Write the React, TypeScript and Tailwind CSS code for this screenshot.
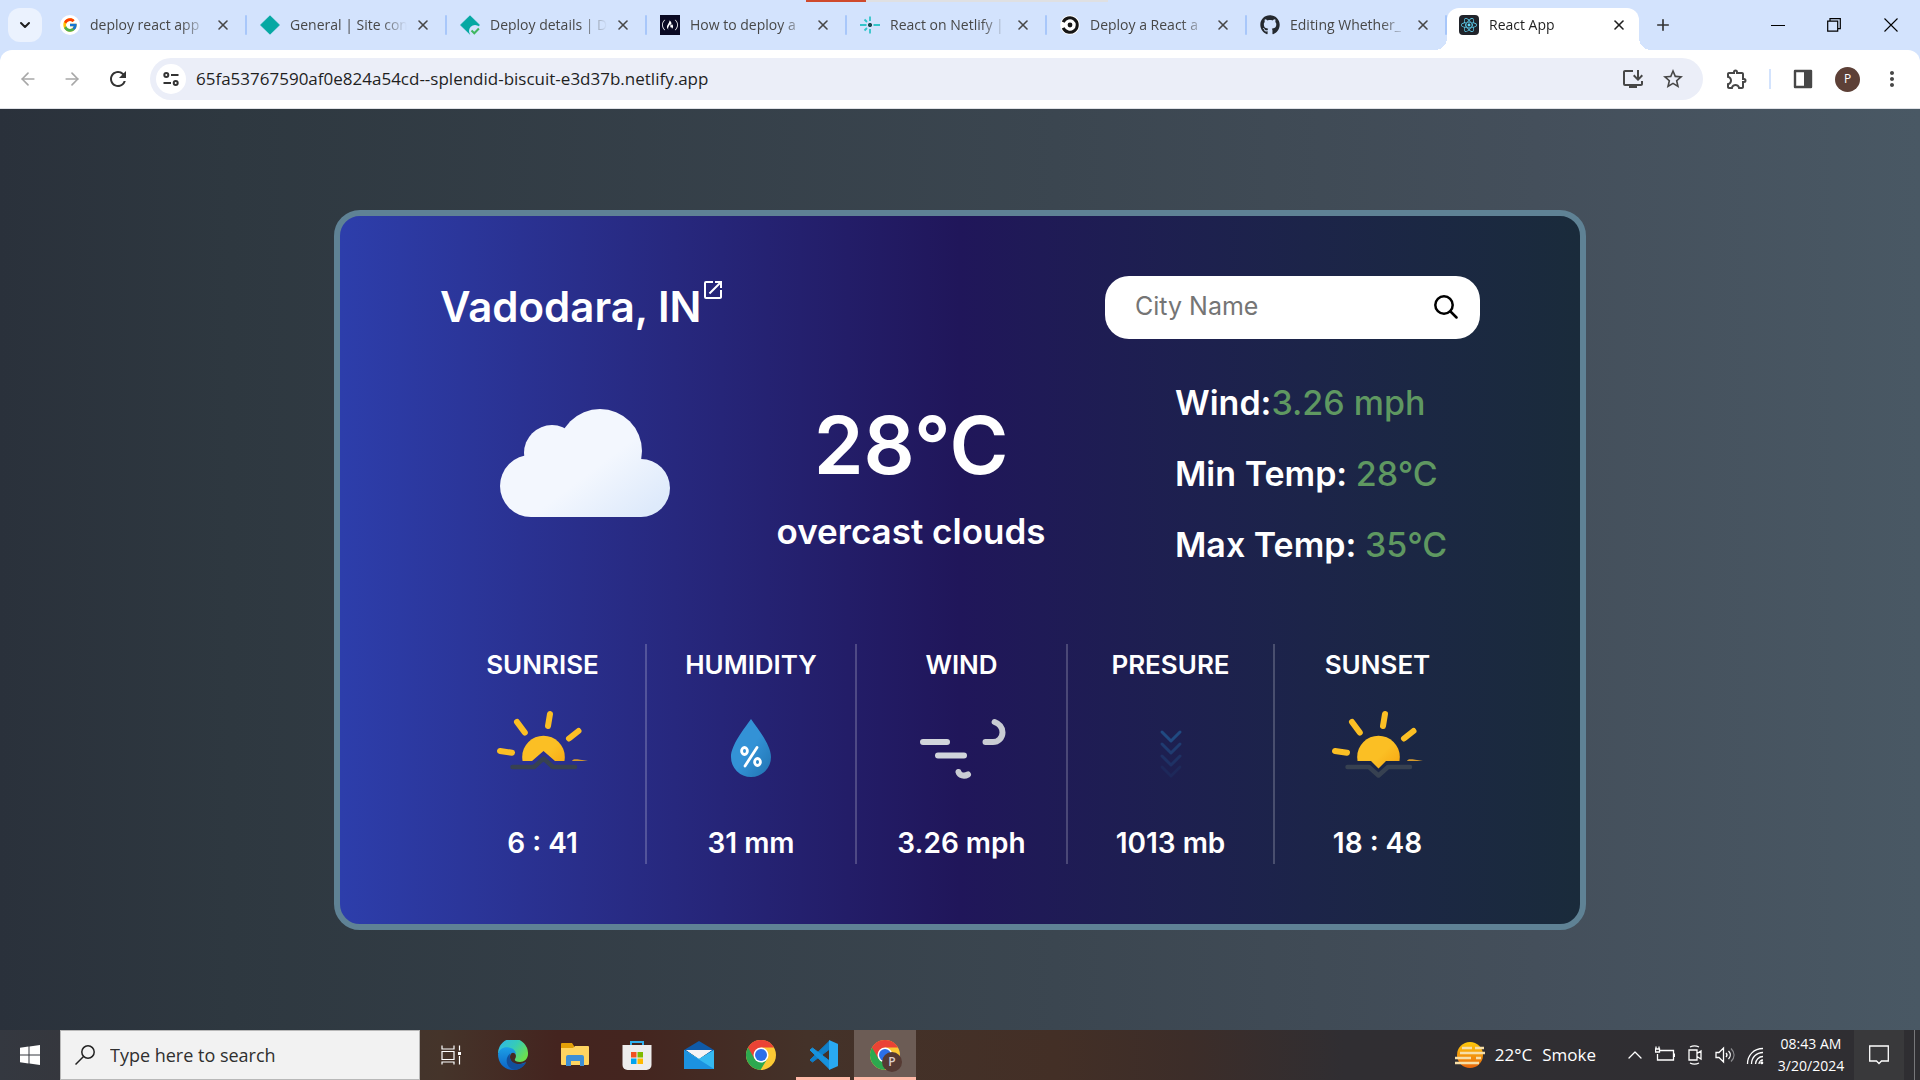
import React, { useState } from "react";
import type { ReactNode } from "react";
import { ArrowLeft, ArrowRight, ChevronDown, ChevronUp, Plus, X } from "lucide-react";
import { FcGoogle } from "react-icons/fc";
import { FaFreeCodeCamp, FaGithub, FaReact } from "react-icons/fa";
import {
  MdMoreVert,
  MdOpenInNew,
  MdOutlineExtension,
  MdOutlineInstallDesktop,
  MdRefresh,
  MdStarBorder,
} from "react-icons/md";

/* ---------- Browser tabs ---------- */

const NetlifyDiamond = ({ done = false }: { done?: boolean }) => (
  <svg viewBox="0 0 20 20" className="size-5">
    <path d="M10 .8 19.4 10 10 19.2.6 10z" fill="#05a8a3" stroke="#05a8a3" strokeLinejoin="round" />
    {done && (
      <>
        <circle cx="15" cy="16" r="6" fill="#d3e3fd" />
        <path d="m11.5 15.5 2.8 2.8 4.6-4.8" fill="none" stroke="#3fb75f" strokeWidth="2" />
      </>
    )}
  </svg>
);

const NetlifySpark = () => (
  <svg viewBox="0 0 20 20" className="size-5" stroke="#32c5c9" strokeWidth="1.8" fill="none">
    <path d="M0 10h6.5M13.5 10H20M10 1.5V6M10 14v4.5M4.5 4.5 7 7M4.5 15.5 7 13" />
    <path d="M8 10h4M10 8v4" stroke="#1d4a52" strokeWidth="2.4" />
  </svg>
);

const CircleMark = () => (
  <svg viewBox="0 0 20 20" className="size-5">
    <circle cx="10" cy="10" r="9.8" fill="#fff" />
    <path d="M3.2 7.2A7.3 7.3 0 1 1 3.2 12.8" fill="none" stroke="#161616" strokeWidth="3" />
    <circle cx="10" cy="10" r="2.4" fill="#161616" />
  </svg>
);

type Tab = { title: string; icon: ReactNode; active?: boolean };

const tabs: Tab[] = [
  {
    title: "deploy react app",
    icon: (
      <span className="grid size-5 place-items-center rounded-full bg-white">
        <FcGoogle className="size-4" />
      </span>
    ),
  },
  { title: "General | Site con", icon: <NetlifyDiamond /> },
  { title: "Deploy details | D", icon: <NetlifyDiamond done /> },
  {
    title: "How to deploy a",
    icon: (
      <span className="grid size-5 place-items-center bg-[#0a0a23]">
        <FaFreeCodeCamp className="size-4 text-white" />
      </span>
    ),
  },
  { title: "React on Netlify |", icon: <NetlifySpark /> },
  { title: "Deploy a React a", icon: <CircleMark /> },
  { title: "Editing Whether_", icon: <FaGithub className="size-5 text-[#24292f]" /> },
  {
    title: "React App",
    active: true,
    icon: (
      <span className="grid size-5 place-items-center rounded-sm bg-[#20232a]">
        <FaReact className="size-4 text-[#61dafb]" />
      </span>
    ),
  },
];

const TabItem = ({ title, icon, active }: Tab) => (
  <div
    className={
      active
        ? "relative mt-2 flex h-[42px] w-[192px] min-w-0 shrink items-center rounded-t-xl bg-white pb-2 pl-3 pr-2 text-[#1f1f1f]"
        : "flex h-full w-[200px] min-w-0 shrink items-center pl-[13px] text-[#474747]"
    }
  >
    {active && (
      <>
        <span className="absolute -left-3 bottom-0 size-3 bg-[radial-gradient(circle_at_0_0,transparent_12px,white_12px)]" />
        <span className="absolute -right-3 bottom-0 size-3 bg-[radial-gradient(circle_at_100%_0,transparent_12px,white_12px)]" />
      </>
    )}
    <span className="shrink-0">{icon}</span>
    <a
      href="#"
      className="ml-2.5 min-w-0 flex-1 overflow-hidden whitespace-nowrap text-sm [mask-image:linear-gradient(to_right,black_78%,transparent)]"
    >
      {title}
    </a>
    <button
      aria-label={`Close ${title}`}
      className={active ? "ml-1 grid size-6 place-items-center" : "ml-1 mr-2.5 grid size-6 place-items-center"}
    >
      <X className="size-4" strokeWidth={2.4} />
    </button>
    {!active && <span className="h-5 w-0.5 shrink-0 rounded bg-[#a8c7fa]" />}
  </div>
);

const TabStrip = () => (
  <header className="relative flex h-[50px] items-center bg-[#d3e3fd] pl-2">
    <div className="absolute left-[42%] top-0 flex h-0.5 w-[302px]">
      <span className="w-[60px] bg-[#cf4a2c]" />
      <span className="flex-1 bg-[#dfe0e2]" />
    </div>
    <button aria-label="Search tabs" className="mr-[5px] grid size-[34px] shrink-0 place-items-center rounded-xl bg-[#ebf2fe]">
      <ChevronDown className="size-4 text-[#1f1f1f]" strokeWidth={3} />
    </button>
    {tabs.map((t) => (
      <TabItem key={t.title} {...t} />
    ))}
    <button aria-label="New tab" className="ml-3 grid size-6 place-items-center">
      <Plus className="size-[18px] text-[#333]" strokeWidth={2.2} />
    </button>
    <div className="ml-auto flex h-full">
      <button aria-label="Minimize" className="grid w-14 place-items-center">
        <span className="h-px w-3.5 bg-black" />
      </button>
      <button aria-label="Restore" className="grid w-14 place-items-center">
        <svg viewBox="0 0 14 14" className="size-3.5" fill="none" stroke="#000" strokeWidth="1.2">
          <path d="M.7 3.2h10v10h-10zM3 3V.7h10.3v10H11" />
        </svg>
      </button>
      <button aria-label="Close window" className="grid w-[58px] place-items-center">
        <svg viewBox="0 0 14 14" className="size-3.5" stroke="#000" strokeWidth="1.1">
          <path d="m.5.5 13 13M13.5.5l-13 13" />
        </svg>
      </button>
    </div>
  </header>
);

const Toolbar = () => (
  <div className="bg-[#d3e3fd]">
    <div className="flex h-[59px] items-center rounded-t-xl border-b border-[#dfe1e6] bg-white px-4 text-[#474747]">
      <button aria-label="Back" className="grid size-6 place-items-center text-[#a8a8a8]">
        <ArrowLeft className="size-5" />
      </button>
      <button aria-label="Forward" className="ml-5 grid size-6 place-items-center text-[#a8a8a8]">
        <ArrowRight className="size-5" />
      </button>
      <button aria-label="Reload" className="ml-[22px] grid size-6 place-items-center">
        <MdRefresh className="size-6 text-[#333]" />
      </button>
      <div className="ml-5 flex h-[42px] min-w-0 flex-1 items-center rounded-full bg-[#ebeef8] pl-1.5 pr-[18px]">
        <button aria-label="Site information" className="grid size-[30px] shrink-0 place-items-center rounded-full bg-white">
          <svg viewBox="0 0 16 16" className="size-4" fill="none" stroke="#333" strokeWidth="2">
            <circle cx="3.3" cy="4" r="2" />
            <path d="M8 4h7.5M.5 12H8" />
            <circle cx="12.7" cy="12" r="2" />
          </svg>
        </button>
        <input
          aria-label="Address"
          defaultValue="65fa53767590af0e824a54cd--splendid-biscuit-e3d37b.netlify.app"
          className="ml-2.5 min-w-0 flex-1 bg-transparent text-[17px] text-[#1f1f1f] outline-none"
        />
        <button aria-label="Install app">
          <MdOutlineInstallDesktop className="size-6" />
        </button>
        <button aria-label="Bookmark" className="ml-4">
          <MdStarBorder className="size-6" />
        </button>
      </div>
      <button aria-label="Extensions" className="ml-[22px]">
        <MdOutlineExtension className="size-6" />
      </button>
      <span className="ml-5 h-5 w-0.5 bg-[#d3e3fd]" />
      <button aria-label="Side panel" className="ml-[22px]">
        <svg viewBox="0 0 20 20" className="size-5">
          <path d="M2 2h16v16H2z" fill="none" stroke="#474747" strokeWidth="2.4" strokeLinejoin="round" />
          <path d="M11 2h7v16h-7z" fill="#474747" />
        </svg>
      </button>
      <button aria-label="Profile" className="ml-[22px] grid size-[25px] place-items-center rounded-full bg-[#5d4037] text-xs text-white">
        P
      </button>
      <button aria-label="Menu" className="ml-5">
        <MdMoreVert className="size-6" />
      </button>
    </div>
  </div>
);

/* ---------- Weather icons ---------- */

const Cloud = () => (
  <svg viewBox="0 0 170 108" className="h-[108px] w-[170px]" role="img" aria-label="Cloud">
    <defs>
      <linearGradient id="cloud" gradientUnits="userSpaceOnUse" x1="50" y1="10" x2="130" y2="116">
        <stop offset="0" stopColor="#f3f7fe" />
        <stop offset=".5" stopColor="#f3f7fe" />
        <stop offset="1" stopColor="#deeafb" />
      </linearGradient>
    </defs>
    <g fill="url(#cloud)">
      <circle cx="31" cy="77" r="31" />
      <circle cx="52" cy="44" r="28" />
      <circle cx="100" cy="42" r="42" />
      <circle cx="141" cy="79" r="29" />
      <path d="M31 50h110v58H31z" />
    </g>
  </svg>
);

const SunHorizon = ({ kind }: { kind: "rise" | "set" }) => {
  const rise = kind === "rise";
  return (
    <svg viewBox="2 0 120 100" className="h-[100px] w-[120px]" role="img" aria-label={rise ? "Sunrise" : "Sunset"}>
      <defs>
        <linearGradient id={`sun-${kind}`} x1="0" y1="0" x2="1" y2="1">
          <stop offset="0" stopColor="#fbbf24" />
          <stop offset=".5" stopColor="#fbbf24" />
          <stop offset="1" stopColor="#f59e0b" />
        </linearGradient>
        <clipPath id={`clip-${kind}`}>
          <path d={rise ? "M0 0h124v71H74L62.500 61 51 71H0z" : "M0 0h124v71H70l-7.500 7.500L55 71H0z"} />
        </clipPath>
      </defs>
      <circle cx="62.500" cy="67" r="21.300" fill={`url(#sun-${kind})`} clipPath={`url(#clip-${kind})`} />
      <path
        d="m19 61 12 1.700M36 32l7.800 10.500M69 24l-2 12M97.500 41 88 48.500"
        fill="none"
        stroke="#fbbf24"
        strokeWidth="6"
        strokeLinecap="round"
      />
      <path d="M91 71c1-2.500 4-2 16 0z" fill="#d69a2c" />
      <path
        d={rise ? "M31.500 77H53l9.500-8.500L72 77h22" : "M31.500 77H53l9.500 8.500L72 77h22"}
        fill="none"
        stroke="#374151"
        strokeWidth="4.500"
        strokeLinecap="round"
        strokeLinejoin="round"
      />
    </svg>
  );
};

const Drop = () => (
  <svg viewBox="0 0 120 100" className="h-[100px] w-[120px]" role="img" aria-label="Humidity">
    <defs>
      <linearGradient id="drop" x1="0" y1="0" x2="1" y2="1">
        <stop offset="0" stopColor="#3392d6" />
        <stop offset=".5" stopColor="#3392d6" />
        <stop offset="1" stopColor="#2073b1" />
      </linearGradient>
    </defs>
    <path d="M60 29c-7 10-20 26-20 38a20 20 0 0 0 40 0c0-12-13-28-20-38z" fill="url(#drop)" />
    <g fill="none" stroke="#fff" strokeWidth="2.800">
      <ellipse cx="53.500" cy="61" rx="2.900" ry="3.500" />
      <ellipse cx="66.500" cy="72" rx="2.900" ry="3.500" />
      <path d="M66 57.500 54 76" strokeLinecap="round" />
    </g>
  </svg>
);

const WindLines = () => (
  <svg viewBox="0 0 120 100" className="h-[100px] w-[120px]" role="img" aria-label="Wind">
    <g fill="none" stroke="#d1d5db" strokeWidth="6" strokeLinecap="round">
      <path d="M21 52h24M36 65.500h26" />
      <path d="M92.600 32c4 1.500 7.900 5 7.900 10.500 0 5.500-4.500 9.500-9.500 9.500h-7.500M56.500 82c1 3.500 5.500 4.700 9.500 2.500" stroke="#c9ccd3" />
    </g>
  </svg>
);

const PressureArrows = () => (
  <svg viewBox="0 0 120 100" className="h-[100px] w-[120px]" role="img" aria-label="Pressure">
    <g fill="none" stroke="#2367a3" strokeWidth="3" strokeLinecap="round" strokeLinejoin="round">
      <path d="m51 42 9 9 9-9" opacity=".6" />
      <path d="m51 54 9 9 9-9" opacity=".4" />
      <path d="m51 66 9 9 9-9" opacity=".25" />
      <path d="m51 77 9 9 9-9" opacity=".12" />
    </g>
  </svg>
);

/* ---------- Weather card ---------- */

const details = [
  { label: "Wind:", value: "3.26 mph" },
  { label: "Min Temp: ", value: "28°C" },
  { label: "Max Temp: ", value: "35°C" },
];

const stats = [
  { label: "SUNRISE", icon: <SunHorizon kind="rise" />, value: "6 : 41" },
  { label: "HUMIDITY", icon: <Drop />, value: "31 mm" },
  { label: "WIND", icon: <WindLines />, value: "3.26 mph" },
  { label: "PRESURE", icon: <PressureArrows />, value: "1013 mb" },
  { label: "SUNSET", icon: <SunHorizon kind="set" />, value: "18 : 48" },
];

const WeatherCard = () => {
  const [city, setCity] = useState("");
  return (
    <section className="w-full max-w-[1252px] rounded-[26px] border-[6px] border-[#5f8295] bg-linear-to-r from-[#2d3eab] via-[#20165a] to-[#1a2b3b] px-[100px] py-[60px] font-['Inter',sans-serif] text-white">
      <div className="flex h-[63px] items-center justify-between">
        <h1 className="flex items-start text-[42px] font-semibold leading-[62px]">
          Vadodara, IN
          <a href="#" aria-label="Open city">
            <MdOpenInNew className="mt-0.5 size-6" />
          </a>
        </h1>
        <form
          onSubmit={(e) => e.preventDefault()}
          className="flex h-[63px] w-[375px] items-center rounded-3xl bg-white pl-[30px] pr-5"
        >
          <input
            aria-label="City Name"
            placeholder="City Name"
            value={city}
            onChange={(e) => setCity(e.target.value)}
            className="min-w-0 flex-1 bg-transparent text-[25px] text-black outline-none placeholder:text-[#757575]"
          />
          <button aria-label="Search" className="p-0.5">
            <svg viewBox="0 0 24 24" className="size-6" fill="none" stroke="#000" strokeWidth="2.500" strokeLinecap="round">
              <circle cx="10" cy="10" r="8.700" />
              <path d="m16.500 16.500 6 6" />
            </svg>
          </button>
        </form>
      </div>

      <div className="mt-7 grid grid-cols-[290fr_362fr_388fr]">
        <div className="flex justify-center pt-[42px]">
          <Cloud />
        </div>
        <div className="pt-7 text-center">
          <p className="text-[80px] font-semibold leading-[100px]">28°C</p>
          <p className="mt-4 text-[35px] font-semibold leading-[40px]">overcast clouds</p>
        </div>
        <dl className="pl-[83px] text-[34px] leading-[71px]">
          {details.map((d) => (
            <div key={d.label} className="flex whitespace-pre">
              <dt className="font-semibold">{d.label}</dt>
              <dd className="font-medium text-[#5f9861]">{d.value}</dd>
            </div>
          ))}
        </dl>
      </div>

      <div className="mt-16 grid grid-cols-[207fr_210fr_211fr_207fr_205fr] divide-x-2 divide-white/20">
        {stats.map((s) => (
          <div key={s.label} className="flex flex-col items-center text-[28px] font-semibold leading-[42px]">
            <h2 className="text-[26px]">{s.label}</h2>
            <div className="mt-1">{s.icon}</div>
            <p className="mt-8">{s.value}</p>
          </div>
        ))}
      </div>
    </section>
  );
};

/* ---------- Taskbar ---------- */

const ChromeLogo = ({ children }: { children?: ReactNode }) => (
  <svg viewBox="0 0 30 30" className="size-[30px]">
    <circle cx="15" cy="15" r="15" fill="#fcc934" />
    <path d="M15 15 2 7.500A15 15 0 0 0 14.500 30L21.500 18.500z" fill="#2da94f" />
    <path d="M2 7.500A15 15 0 0 1 28 7.500H15L8.500 18.700z" fill="#ea4335" />
    <circle cx="15" cy="15" r="7.500" fill="#fff" />
    <circle cx="15" cy="15" r="6" fill="#2b6fe8" />
    {children}
  </svg>
);

const EdgeLogo = () => (
  <svg viewBox="0 0 30 30" className="size-[30px]">
    <defs>
      <linearGradient id="edge-top" x1="0" y1="0" x2="1" y2=".6">
        <stop offset="0" stopColor="#2fb4ef" />
        <stop offset=".55" stopColor="#36cbb8" />
        <stop offset="1" stopColor="#6be04f" />
      </linearGradient>
      <linearGradient id="edge-side" x1="0" y1="0" x2="0" y2="1">
        <stop offset="0" stopColor="#1c9fe6" />
        <stop offset="1" stopColor="#0c63c6" />
      </linearGradient>
    </defs>
    <path d="M0 13A15 15 0 0 1 30 14c0 5-4 8-8 8-4 0-6-1.500-5-3 2-3 1-7-4-7z" fill="url(#edge-top)" />
    <path d="M0 14C2 7 8 7 11 7.500c5 1 7 4 7 7-2-3-6-2-6 2.500 0 6 6 10 16 5C25 27.500 20 30 15 30 6.500 30 0 23.500 0 14z" fill="url(#edge-side)" />
    <path d="M12 13.500C5 20 10 29.500 17 29.900 22 29.500 26 26.500 28 22.500 20 26.500 10 23 12 13.500z" fill="#124f9c" />
  </svg>
);

const FolderLogo = () => (
  <svg viewBox="0 0 30 30" className="size-[30px]">
    <path d="M1 4a1 1 0 0 1 1-1h10l2 3v5H1z" fill="#e3a008" />
    <path d="M1 8h12l2-2h13a1 1 0 0 1 1 1v17a1 1 0 0 1-1 1H2a1 1 0 0 1-1-1z" fill="#ffd561" />
    <path d="M6 26v-9a2 2 0 0 1 2-2h14a2 2 0 0 1 2 2v9h-4v-5h-9v5z" fill="#3d8fd6" />
  </svg>
);

const StoreLogo = () => (
  <svg viewBox="0 0 30 30" className="size-[30px]">
    <path d="M9 7V2h12v5" fill="none" stroke="#2fb0ef" strokeWidth="2" />
    <path d="M.500 5h29v20a5 5 0 0 1-5 5h-19a5 5 0 0 1-5-5z" fill="#ededed" />
    <path d="M9 12h5.500v5.500H9z" fill="#f25022" />
    <path d="M15.500 12H21v5.500h-5.500z" fill="#7fba00" />
    <path d="M9 18.500h5.500V24H9z" fill="#00a4ef" />
    <path d="M15.500 18.500H21V24h-5.500z" fill="#ffb900" />
  </svg>
);

const MailLogo = () => (
  <svg viewBox="0 0 30 30" className="size-[30px]">
    <path d="M0 10 15 1l15 9v4H0z" fill="#0f5aa8" />
    <path d="M2 10h26L15 19z" fill="#f4f4f6" />
    <path d="M0 10l15 8.500L30 10v19H0z" fill="#35b9f1" />
    <path d="M2.500 10h25L15 18.500z" fill="#f4f4f6" />
    <path d="M0 10l30 19H0z" fill="#1c92e0" />
    <path d="M2.500 10h25L15 18.500z" fill="#f4f4f6" />
  </svg>
);

const CodeLogo = () => (
  <svg viewBox="0 0 30 30" className="size-[30px]">
    <path d="M2 20 21 1.500v8L4.500 22z" fill="#0f7fc9" stroke="#0f7fc9" strokeLinejoin="round" />
    <path d="M2 10 21 28.500v-8L4.500 8z" fill="#1792dd" stroke="#1792dd" strokeLinejoin="round" />
    <path d="M21 0l8 3.500a1 1 0 0 1 1 1v21a1 1 0 0 1-1 1L21 30z" fill="#29a9f2" />
  </svg>
);

const ProfileChrome = () => (
  <span className="relative">
    <ChromeLogo />
    <span className="absolute -bottom-0.5 -right-0.5 grid size-5 place-items-center rounded-full bg-[#553a33] text-xs font-semibold text-[#dccfca]">
      P
    </span>
  </span>
);

const apps = [
  { name: "Microsoft Edge", icon: <EdgeLogo />, state: "" },
  { name: "File Explorer", icon: <FolderLogo />, state: "" },
  { name: "Microsoft Store", icon: <StoreLogo />, state: "" },
  { name: "Mail", icon: <MailLogo />, state: "" },
  { name: "Google Chrome", icon: <ChromeLogo />, state: "" },
  { name: "Visual Studio Code", icon: <CodeLogo />, state: "open" },
  { name: "Chrome profile", icon: <ProfileChrome />, state: "active" },
];

const TrayIcon = ({ label, children }: { label: string; children: ReactNode }) => (
  <button aria-label={label} className="grid w-[30px] place-items-center">
    <svg viewBox="0 0 20 20" className="size-5" fill="none" stroke="#fff" strokeWidth="1.300">
      {children}
    </svg>
  </button>
);

const Taskbar = () => (
  <footer className="flex h-[50px] bg-[linear-gradient(to_right,#343840_0%,#373538_10%,#45342a_23%,#44241f_29%,#44251f_33%,#443229_42%,#432f26_55%,#3c2d29_62%,#302e32_70%,#2f2e32_100%)] text-white">
    <button aria-label="Start" className="grid w-[60px] shrink-0 place-items-center">
      <svg viewBox="0 0 20 20" className="size-5" fill="#fff">
        <path d="M0 2.800 8.500 1.600v7.900H0zM9.500 1.500 20 0v9.500H9.500zM0 10.500h8.500v7.900L0 17.200zM9.500 10.500H20V20L9.500 18.500z" />
      </svg>
    </button>
    <label className="flex w-[360px] min-w-0 items-center border border-[#b8b8b8] bg-[#f2f2f2] pl-3.5 text-[#2b2b2b]">
      <svg viewBox="0 0 20 20" className="size-5 shrink-0" fill="none" stroke="#222" strokeWidth="1.500">
        <circle cx="13" cy="7" r="6.200" />
        <path d="M8.500 11.500.500 19.500" />
      </svg>
      <input
        aria-label="Type here to search"
        placeholder="Type here to search"
        className="ml-[15px] min-w-0 flex-1 bg-transparent text-lg outline-none placeholder:text-[#2f2f2f]"
      />
    </label>
    <button aria-label="Task view" className="grid w-[62px] shrink-0 place-items-center">
      <svg viewBox="0 0 20 20" className="size-5" fill="none" stroke="#fff" strokeWidth="1.200">
        <path d="M1 .500v3.500h12V.500M1 6.500h12v8H1zM1 19.500V17h12v2.500M18.500.500v5M18.500 11v8.500" />
        <path d="M17 7h3v3h-3z" fill="#fff" stroke="none" />
      </svg>
    </button>
    {apps.map((a) => (
      <button
        key={a.name}
        aria-label={a.name}
        className={
          a.state === "active"
            ? "grid w-[62px] shrink-0 place-items-center border-b-3 border-[#ffb9a8] bg-[#6c5c55] pt-[3px]"
            : "relative grid w-[62px] shrink-0 place-items-center"
        }
      >
        {a.icon}
        {a.state === "open" && <span className="absolute inset-x-1 bottom-0 h-[3px] bg-[#ffb9a8]" />}
      </button>
    ))}
    <div className="ml-auto flex">
      <button className="flex items-center text-[17px]">
        <svg viewBox="0 0 30 30" className="size-[30px]">
          <defs>
            <linearGradient id="smoke" x1="0" y1="0" x2="0" y2="1">
              <stop offset="0" stopColor="#ffcb0c" />
              <stop offset="1" stopColor="#e8650c" />
            </linearGradient>
          </defs>
          <circle cx="15" cy="15" r="13" fill="url(#smoke)" />
          <path d="M7 8h10M20 8h9M5 13h25M0 18h16M21 18h5M0 23h24" stroke="#f7dfa8" strokeWidth="2.600" />
        </svg>
        <span className="ml-2.5">22°C</span>
        <span className="ml-2.5">Smoke</span>
      </button>
      <div className="ml-6 flex">
        <button aria-label="Show hidden icons" className="grid w-[30px] place-items-center">
          <ChevronUp className="size-6" strokeWidth={1.3} />
        </button>
        <TrayIcon label="Battery">
          <path d="M5 5.500h13.500v9.500H2.500v-6M19.500 8.500v3.500M1 1.500v2M4 1.500v2M.500 4h4v3h-4z" />
        </TrayIcon>
        <TrayIcon label="Meet now">
          <path d="M4 5h8v10H4zM12 8.500 16 6v8l-4-2.500M5 2c3-1.500 6-1.500 9 0M5 18c3 1.500 6 1.500 9 0" />
        </TrayIcon>
        <TrayIcon label="Volume">
          <path d="M1 7.500h3L8.500 3v14L4 12.500H1zM11 8c1.200 1.200 1.200 2.800 0 4M13.500 6c2.300 2.300 2.300 5.700 0 8" />
          <path d="M16 3.500c4 4 4 9 0 13" stroke="#8b8b8e" />
        </TrayIcon>
        <TrayIcon label="Network">
          <path d="M2.500 19C2.500 10 9 3.500 18 3.500M6.500 19C6.500 12.500 11.500 7.500 18 7.500M10.500 19c0-4 3.500-7.500 7.500-7.500M14 19c0-2.200 1.800-4 4-4" />
          <circle cx="16.800" cy="17.800" r="1.500" fill="#fff" stroke="none" />
        </TrayIcon>
      </div>
      <div className="w-[82px] text-center text-sm leading-[22px]">
        <p className="pt-[3px]">08:43 AM</p>
        <p>3/20/2024</p>
      </div>
      <button aria-label="Notifications" className="ml-0.5 grid w-[50px] place-items-center bg-[#39393b]">
        <svg viewBox="0 0 20 20" className="size-5" fill="none" stroke="#fff" strokeWidth="1.300">
          <path d="M.700 1h18.600v15H12.500L10 18.500 7.500 16H.700z" />
        </svg>
      </button>
      <span className="ml-2.5 mr-[5px] w-px bg-[#77777a]" />
    </div>
  </footer>
);

export default function App() {
  return (
    <div className="flex min-h-screen flex-col font-['Open_Sans','Noto_Sans',sans-serif]">
      <TabStrip />
      <Toolbar />
      <main className="flex flex-1 items-center justify-center bg-[linear-gradient(to_right,#2a313b_0%,#2e3840_12%,#3b4650_55%,#444f5b_80%,#495864_100%)]">
        <WeatherCard />
      </main>
      <Taskbar />
    </div>
  );
}
